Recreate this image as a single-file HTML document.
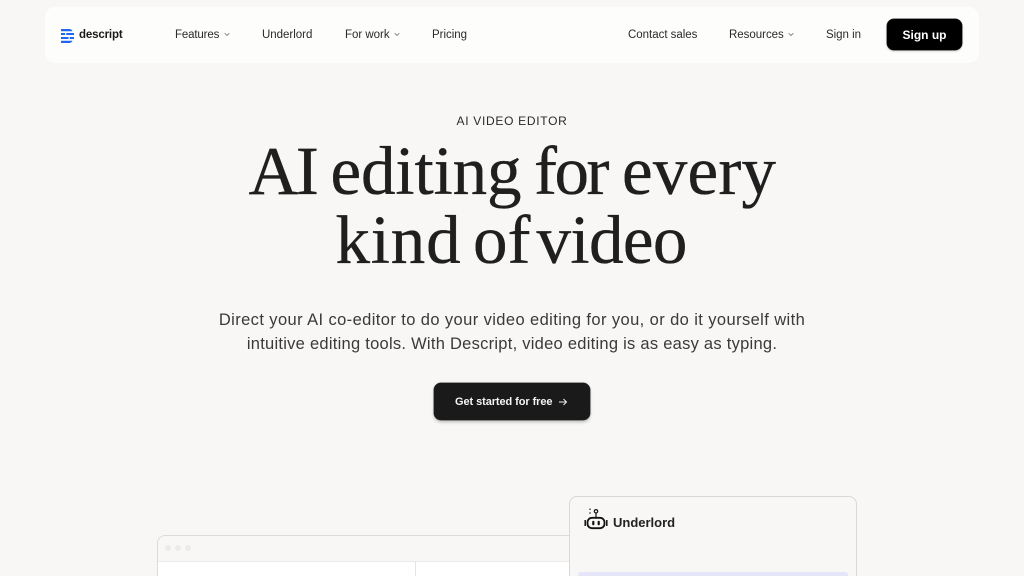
<!DOCTYPE html>
<html lang="en">
<head>
<meta charset="utf-8">
<title>Descript</title>
<style>
html,body{margin:0;padding:0;width:1024px;height:576px;overflow:hidden;background:#f8f7f5;}
body{position:relative;font-family:"Liberation Sans",sans-serif;color:#1c1c1c;}
.t{position:absolute;white-space:nowrap;line-height:1;}
.nav{font-size:11.5px;color:#2a2a2a;top:30px;letter-spacing:-.02px;}
.h{font-family:'Liberation Serif',serif;font-size:69px;color:#1f1f1f;-webkit-text-stroke:.35px #1f1f1f;}
svg{position:absolute;display:block;}
</style>
</head>
<body>
<div style="position:absolute;left:45px;top:7px;width:934px;height:56px;background:#fdfdfc;border-radius:10px;"></div>

<svg style="left:61px;top:29px" width="13" height="14" viewBox="0 0 13 14">
<g fill="#1f66ff">
<path d="M0 0H8Q10.500 0 11.500 2.200H0Z"/>
<rect x="0" y="4" width="4" height="2"/><rect x="5.200" y="4" width="7.800" height="2"/>
<rect x="0" y="8" width="7.500" height="2"/><rect x="8.800" y="8" width="4.200" height="2"/>
<path d="M0 11.800H11.500Q10.500 14 8 14H0Z"/>
</g>
</svg>
<div class="t" style="left:79px;top:30px;font-size:11.500px;font-weight:700;color:#1a1a1a;letter-spacing:-.15px;">descript</div>

<div class="t nav" style="left:175px;letter-spacing:-.15px;">Features</div>
<svg style="left:224px;top:32px" width="6" height="5" viewBox="0 0 6 5"><path d="M.7 1.200 3 3.500 5.300 1.200" fill="none" stroke="#777" stroke-width=".8"/></svg>
<div class="t nav" style="left:262px;">Underlord</div>
<div class="t nav" style="left:345px;">For work</div>
<svg style="left:394px;top:32px" width="6" height="5" viewBox="0 0 6 5"><path d="M.7 1.200 3 3.500 5.300 1.200" fill="none" stroke="#777" stroke-width=".8"/></svg>
<div class="t nav" style="left:432px;">Pricing</div>
<div class="t nav" style="left:628px;">Contact sales</div>
<div class="t nav" style="left:729px;">Resources</div>
<svg style="left:788px;top:32px" width="6" height="5" viewBox="0 0 6 5"><path d="M.7 1.200 3 3.500 5.300 1.200" fill="none" stroke="#777" stroke-width=".8"/></svg>
<div class="t nav" style="left:826px;">Sign in</div>

<div style="position:absolute;left:887px;top:19px;width:75px;height:31px;background:#000;border-radius:7px;box-shadow:0 0 0 .5px #333,0 1px 2px rgba(0,0,0,.25);"></div>
<div class="t" style="left:887px;width:75px;text-align:center;top:29px;font-size:12px;font-weight:700;color:#fff;">Sign up</div>

<div class="t" style="left:0;width:1024px;text-align:center;top:115px;font-size:12px;letter-spacing:.7px;color:#2a2a2a;">AI VIDEO EDITOR</div>

<div class="t h" style="top:137px;left:248.500px;letter-spacing:-2.400px;">AI</div>
<div class="t h" style="top:137px;left:330.500px;letter-spacing:-.1px;">editing</div>
<div class="t h" style="top:137px;left:534px;letter-spacing:-2.500px;">for</div>
<div class="t h" style="top:137px;left:622px;letter-spacing:.2px;">every</div>
<div class="t h" style="top:206px;left:335.500px;letter-spacing:.8px;">kind</div>
<div class="t h" style="top:206px;left:473px;letter-spacing:0;">of</div>
<div class="t h" style="top:206px;left:536.500px;letter-spacing:-.6px;">video</div>

<div class="t" style="left:0;width:1024px;text-align:center;top:312px;font-size:16.500px;letter-spacing:.4px;color:#3a3a3a;">Direct your AI co-editor to do your video editing for you, or do it yourself with</div>
<div class="t" style="left:0;width:1024px;text-align:center;top:336px;font-size:16.500px;letter-spacing:.26px;color:#3a3a3a;">intuitive editing tools. With Descript, video editing is as easy as typing.</div>

<div style="position:absolute;left:434px;top:383px;width:156px;height:37px;background:#1a1a1a;border-radius:7px;box-shadow:0 0 0 .5px #444,0 2px 3px rgba(0,0,0,.25);"></div>
<div class="t" style="left:455px;top:397px;font-size:11px;font-weight:700;color:#f4f4f4;letter-spacing:-.08px;">Get started for free</div>
<svg style="left:558px;top:396.500px" width="10" height="10" viewBox="0 0 10 10"><path d="M1 5H8.500M5.500 2 8.500 5 5.500 8" fill="none" stroke="#eee" stroke-width="1"/></svg>

<div style="position:absolute;left:157px;top:535px;width:500px;height:60px;background:#f8f7f5;border:1px solid #dcdbd8;border-radius:8px 8px 0 0;box-sizing:border-box;"></div>
<div style="position:absolute;left:158px;top:561px;width:420px;height:15px;background:#fff;border-top:1px solid #ebeae8;box-sizing:border-box;"></div>
<div style="position:absolute;left:415px;top:561px;width:1px;height:15px;background:#e6e5e3;"></div>
<div style="position:absolute;left:165px;top:545px;width:6px;height:6px;border-radius:50%;background:#ecebe9;"></div>
<div style="position:absolute;left:175px;top:545px;width:6px;height:6px;border-radius:50%;background:#ecebe9;"></div>
<div style="position:absolute;left:185px;top:545px;width:6px;height:6px;border-radius:50%;background:#ecebe9;"></div>

<div style="position:absolute;left:569px;top:496px;width:288px;height:100px;background:#f8f7f5;border:1.500px solid #d9d8d5;border-radius:8px;box-sizing:border-box;"></div>
<div style="position:absolute;left:578px;top:572px;width:270px;height:4px;background:#e6e6fa;border-radius:3px 3px 0 0;"></div>
<svg style="left:584px;top:507px" width="24" height="23" viewBox="0 0 24 23">
<g fill="none" stroke="#111">
<rect x="3.500" y="10.800" width="17" height="10.400" rx="4.500" stroke-width="1.800"/>
<circle cx="12" cy="4.300" r="1.700" stroke-width="1.200"/>
<path d="M12 6V10" stroke-width="1.200"/>
<path d="M1.200 13V19M22.800 13V19" stroke-width="1.500"/>
<path d="M6 1.500V3M6 5.200V6.700" stroke-width="1.100"/>
</g>
<rect x="8.200" y="13.800" width="2.200" height="4.500" rx="1.100" fill="#111"/>
<rect x="13.600" y="13.800" width="2.200" height="4.500" rx="1.100" fill="#111"/>
</svg>
<div class="t" style="left:613px;top:516px;font-size:13px;font-weight:700;color:#222;">Underlord</div>
</body>
</html>
